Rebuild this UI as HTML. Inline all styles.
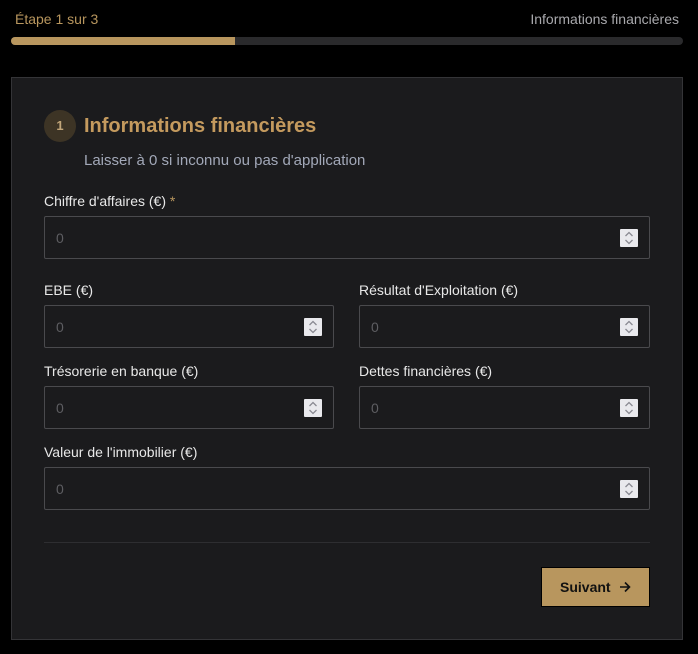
<!DOCTYPE html>
<html><head><style>
*{box-sizing:border-box;margin:0;padding:0}
body{width:698px;height:654px;background:#000;font-family:"Liberation Sans",sans-serif;position:relative;overflow:hidden}
.a{position:absolute}
.lbl{position:absolute;font-size:14px;color:#e8e8e8}
.inp{position:absolute;height:43px;border:1px solid #4a4a4d;border-radius:2px;background:#1b1b1d}
.inp span{position:absolute;left:11px;top:13px;font-size:14px;color:#5e5e62}
.sp{position:absolute;right:11px;top:12px;width:18px;height:18px;background:#e9e9ed;border-radius:1px}
.sp svg{position:absolute;left:4px;top:2px}
</style></head><body>
<div class="a" style="left:15px;top:11px;font-size:14px;color:#b8965e">Étape 1 sur 3</div>
<div class="a" style="right:19px;top:11px;font-size:14px;color:#a9a9ad">Informations financières</div>
<div class="a" style="left:11px;top:37px;width:672px;height:8px;background:#2a2a2c;border-radius:4px;overflow:hidden"><div style="width:224px;height:8px;background:#b8965e"></div></div>
<div class="a" style="left:11px;top:77px;width:672px;height:563px;background:#1b1b1d;border:1px solid #343437"></div>
<div class="a" style="left:44px;top:110px;width:32px;height:32px;border-radius:50%;background:#3d3425;color:#c2a67a;font-size:13px;font-weight:bold;text-align:center;line-height:32px">1</div>
<div class="a" style="left:84px;top:115px;font-size:20px;font-weight:bold;color:#c49a5e">Informations financières</div>
<div class="a" style="left:84px;top:152px;font-size:15px;color:#a2a8b8">Laisser à 0 si inconnu ou pas d'application</div>
<div class="lbl" style="left:44px;top:193px">Chiffre d'affaires (€) <span style="color:#b8965e">*</span></div>
<div class="inp" style="left:44px;top:216px;width:606px"><span>0</span><div class="sp"><svg width="10" height="14" viewBox="0 0 10 14"><path d="M1.5 5L5 1.5 8.5 5M1.5 9L5 12.5 8.5 9" fill="none" stroke="#8a8a92" stroke-width="1.3"/></svg></div></div>
<div class="lbl" style="left:44px;top:282px">EBE (€)</div>
<div class="lbl" style="left:359px;top:282px">Résultat d'Exploitation (€)</div>
<div class="inp" style="left:44px;top:305px;width:290px"><span>0</span><div class="sp"><svg width="10" height="14" viewBox="0 0 10 14"><path d="M1.5 5L5 1.5 8.5 5M1.5 9L5 12.5 8.5 9" fill="none" stroke="#8a8a92" stroke-width="1.3"/></svg></div></div>
<div class="inp" style="left:359px;top:305px;width:291px"><span>0</span><div class="sp"><svg width="10" height="14" viewBox="0 0 10 14"><path d="M1.5 5L5 1.5 8.5 5M1.5 9L5 12.5 8.5 9" fill="none" stroke="#8a8a92" stroke-width="1.3"/></svg></div></div>
<div class="lbl" style="left:44px;top:363px">Trésorerie en banque (€)</div>
<div class="lbl" style="left:359px;top:363px">Dettes financières (€)</div>
<div class="inp" style="left:44px;top:386px;width:290px"><span>0</span><div class="sp"><svg width="10" height="14" viewBox="0 0 10 14"><path d="M1.5 5L5 1.5 8.5 5M1.5 9L5 12.5 8.5 9" fill="none" stroke="#8a8a92" stroke-width="1.3"/></svg></div></div>
<div class="inp" style="left:359px;top:386px;width:291px"><span>0</span><div class="sp"><svg width="10" height="14" viewBox="0 0 10 14"><path d="M1.5 5L5 1.5 8.5 5M1.5 9L5 12.5 8.5 9" fill="none" stroke="#8a8a92" stroke-width="1.3"/></svg></div></div>
<div class="lbl" style="left:44px;top:444px">Valeur de l'immobilier (€)</div>
<div class="inp" style="left:44px;top:467px;width:606px"><span>0</span><div class="sp"><svg width="10" height="14" viewBox="0 0 10 14"><path d="M1.5 5L5 1.5 8.5 5M1.5 9L5 12.5 8.5 9" fill="none" stroke="#8a8a92" stroke-width="1.3"/></svg></div></div>
<div class="a" style="left:44px;top:542px;width:606px;height:1px;background:#2e2e31"></div>
<div class="a" style="left:541px;top:567px;width:109px;height:40px;background:#b8965e;border:1px solid #000;font-size:14px;font-weight:bold;color:#111;line-height:38px;padding-left:18px">Suivant<svg style="position:absolute;left:77px;top:13px" width="12" height="12" viewBox="0 0 12 12"><path d="M1 6H10.5M6 1.5L10.5 6 6 10.5" fill="none" stroke="#111" stroke-width="1.6"/></svg></div>
</body></html>
